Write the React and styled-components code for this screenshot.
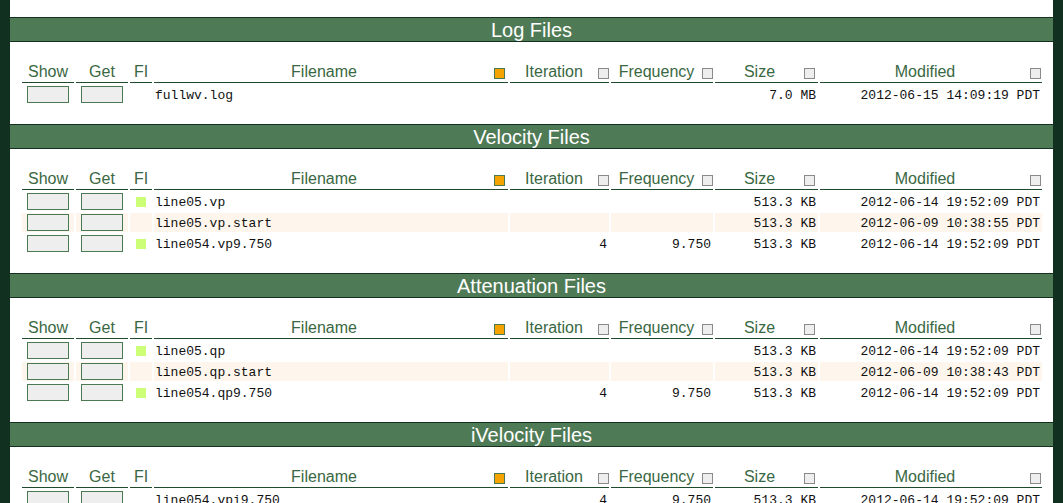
import React from 'react';
import styled, { createGlobalStyle } from 'styled-components';

const GlobalStyle = createGlobalStyle`
  html, body {
    margin: 0;
    padding: 0;
    background: #12301f;
  }
  body {
    font-family: "Liberation Sans", Arial, sans-serif;
  }
`;

const sections = [
  {
    title: 'Log Files',
    rows: [
      { name: 'fullwv.log', size: '7.0 MB', modified: '2012-06-15 14:09:19 PDT' },
    ],
  },
  {
    title: 'Velocity Files',
    rows: [
      { name: 'line05.vp', fi: true, size: '513.3 KB', modified: '2012-06-14 19:52:09 PDT' },
      { name: 'line05.vp.start', size: '513.3 KB', modified: '2012-06-09 10:38:55 PDT' },
      { name: 'line054.vp9.750', fi: true, iteration: '4', frequency: '9.750', size: '513.3 KB', modified: '2012-06-14 19:52:09 PDT' },
    ],
  },
  {
    title: 'Attenuation Files',
    rows: [
      { name: 'line05.qp', fi: true, size: '513.3 KB', modified: '2012-06-14 19:52:09 PDT' },
      { name: 'line05.qp.start', size: '513.3 KB', modified: '2012-06-09 10:38:43 PDT' },
      { name: 'line054.qp9.750', fi: true, iteration: '4', frequency: '9.750', size: '513.3 KB', modified: '2012-06-14 19:52:09 PDT' },
    ],
  },
  {
    title: 'iVelocity Files',
    rows: [
      { name: 'line054.vpi9.750', iteration: '4', frequency: '9.750', size: '513.3 KB', modified: '2012-06-14 19:52:09 PDT' },
    ],
  },
];

const columns = [
  { label: 'Show' },
  { label: 'Get' },
  { label: 'FI' },
  { label: 'Filename', sort: 'active', gap: 3 },
  { label: 'Iteration', sort: 'idle', gap: 0 },
  { label: 'Frequency', sort: 'idle', gap: 0 },
  { label: 'Size', sort: 'idle', gap: 3 },
  { label: 'Modified', sort: 'idle', gap: 1 },
];

const Section = ({ title, rows }) => (
  <>
    <TitleBar>{title}</TitleBar>
    <TableWrap>
      <Grid>
        {columns.map((col) => (
          <HeadCell key={col.label}>
            <HeadLabel>{col.label}</HeadLabel>
            {col.sort && <SortBox $active={col.sort === 'active'} $gap={col.gap} />}
          </HeadCell>
        ))}
        {rows.map((row, i) => {
          const alt = i % 2 === 1;
          return (
            <React.Fragment key={row.name}>
              <Cell $alt={alt} $align="center"><Toggle /></Cell>
              <Cell $alt={alt} $align="center"><Toggle /></Cell>
              <Cell $alt={alt} $align="center">{row.fi && <FiMark />}</Cell>
              <Cell $alt={alt} $pad={1}>{row.name}</Cell>
              <Cell $alt={alt} $align="flex-end">{row.iteration}</Cell>
              <Cell $alt={alt} $align="flex-end">{row.frequency}</Cell>
              <Cell $alt={alt} $align="flex-end">{row.size}</Cell>
              <Cell $alt={alt} $align="flex-end">{row.modified}</Cell>
            </React.Fragment>
          );
        })}
      </Grid>
    </TableWrap>
  </>
);

const App = () => (
  <>
    <GlobalStyle />
    <Page>
      {sections.map((s) => (
        <Section key={s.title} title={s.title} rows={s.rows} />
      ))}
    </Page>
  </>
);

const Page = styled.div`
  margin: 0 10px;
  background: #fff;
  padding-top: 17px;
  min-height: 100vh;
`;

const TitleBar = styled.div`
  box-sizing: border-box;
  height: 25px;
  padding-top: 1px;
  line-height: 23px;
  background: #4f7a56;
  border-top: 1px solid #133020;
  border-bottom: 1px solid #133020;
  color: #fff;
  font-size: 20px;
  text-align: center;
`;

const TableWrap = styled.div`
  padding: 18px 11px 20px 12px;
`;

const Grid = styled.div`
  display: grid;
  grid-template-columns: 52px 52px 22px 1fr 99px 102px 103px 222px;
  column-gap: 2px;
  row-gap: 2px;
`;

const HeadCell = styled.div`
  box-sizing: border-box;
  height: 23px;
  padding-top: 2px;
  display: flex;
  align-items: center;
  border-bottom: 1px solid #1f4a2b;
  color: #3a6843;
  font-size: 16px;
`;

const HeadLabel = styled.span`
  flex: 1;
  text-align: center;
  white-space: nowrap;
`;

const SortBox = styled.span`
  box-sizing: border-box;
  width: 11px;
  height: 11px;
  margin-top: 2px;
  margin-right: ${(p) => p.$gap}px;
  background: ${(p) => (p.$active ? '#f5a300' : '#eeeeee')};
  border: 1px solid ${(p) => (p.$active ? '#4b7a52' : '#8a8a8a')};
`;

const Cell = styled.div`
  box-sizing: border-box;
  height: 19px;
  padding: 1px ${(p) => (p.$pad !== undefined ? p.$pad : 2)}px 0;
  display: flex;
  align-items: center;
  justify-content: ${(p) => p.$align || 'flex-start'};
  background: ${(p) => (p.$alt ? '#fef6ec' : 'transparent')};
  font-family: "Liberation Mono", "Courier New", monospace;
  font-size: 13px;
  color: #111;
  white-space: nowrap;
`;

const Toggle = styled.span`
  box-sizing: border-box;
  width: 42px;
  height: 17px;
  margin-top: -1px;
  background: #eeeeee;
  border: 1px solid #4b7a52;
`;

const FiMark = styled.span`
  width: 10px;
  height: 10px;
  background: #ccff77;
`;

export default App;
